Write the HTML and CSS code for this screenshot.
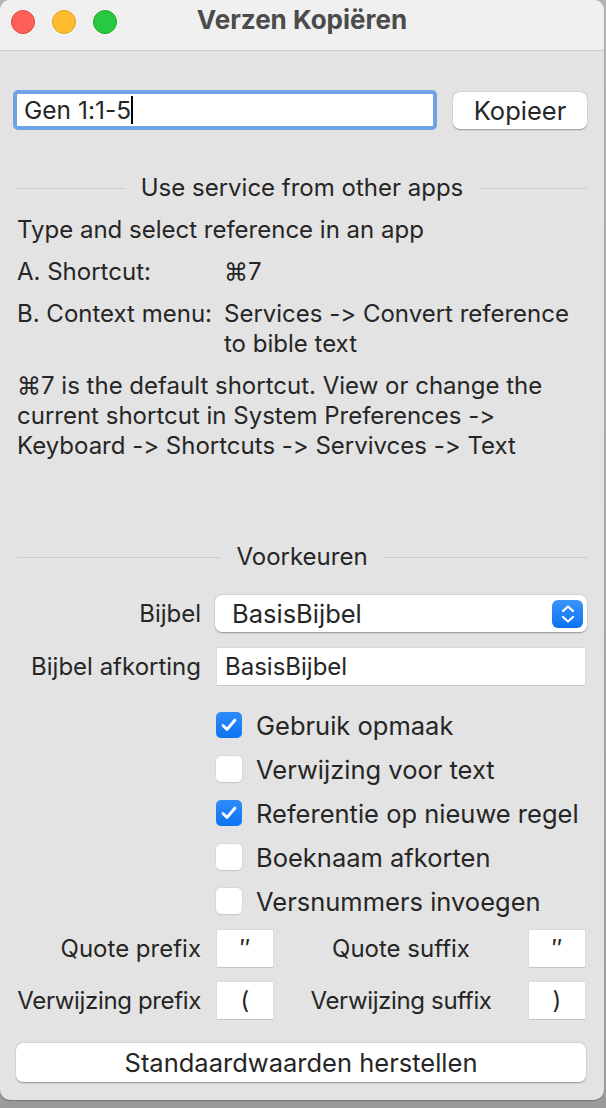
FILE: index.html
```html
<!DOCTYPE html>
<html>
<head>
<meta charset="utf-8">
<link rel="stylesheet" href="styles.css">
</head>
<body>
<div class="window">
  <div class="titlebar">
    <div class="lights">
      <span class="light red"></span>
      <span class="light yellow"></span>
      <span class="light green"></span>
    </div>
    <div class="title">Verzen Kopiëren</div>
  </div>
  <div class="content">
    <div class="toprow">
      <div class="search"><span class="searchtext">Gen 1:1-5</span><span class="caret"></span></div>
      <div class="btn kopieer">Kopieer</div>
    </div>

    <div class="info">
      <div class="sep"><span class="sepline"></span><span class="septext">Use service from other apps</span><span class="sepline"></span></div>
      <div class="line">Type and select reference in an app</div>
      <div class="kv"><span class="k">A. Shortcut:</span><span class="v">⌘7</span></div>
      <div class="kv"><span class="k">B. Context menu:</span><span class="v">Services -&gt; Convert reference<br>to bible text</span></div>
      <div class="line">⌘7 is the default shortcut. View or change the current shortcut in System Preferences -&gt; Keyboard -&gt; Shortcuts -&gt; Servivces -&gt; Text</div>
    </div>

    <div class="sep sep2"><span class="sepline"></span><span class="septext">Voorkeuren</span><span class="sepline"></span></div>

    <div class="prefs">
      <div class="prow">
        <span class="plabel">Bijbel</span>
        <div class="popup"><span>BasisBijbel</span>
          <span class="stepper"><svg width="16" height="22" viewBox="0 0 16 22"><path d="M3 8 L8 3.5 L13 8" fill="none" stroke="#fff" stroke-width="2.2" stroke-linecap="round" stroke-linejoin="round"/><path d="M3 14 L8 18.5 L13 14" fill="none" stroke="#fff" stroke-width="2.2" stroke-linecap="round" stroke-linejoin="round"/></svg></span>
        </div>
      </div>
      <div class="prow afk">
        <span class="plabel">Bijbel afkorting</span>
        <div class="field wide">BasisBijbel</div>
      </div>
      <div class="checks">
        <div class="check"><span class="box on"><svg width="18" height="16" viewBox="0 0 18 16"><path d="M3 8.5 L7 12.5 L15 3" fill="none" stroke="#fff" stroke-width="2.8" stroke-linecap="round" stroke-linejoin="round"/></svg></span>Gebruik opmaak</div>
        <div class="check"><span class="box"></span>Verwijzing voor text</div>
        <div class="check"><span class="box on"><svg width="18" height="16" viewBox="0 0 18 16"><path d="M3 8.5 L7 12.5 L15 3" fill="none" stroke="#fff" stroke-width="2.8" stroke-linecap="round" stroke-linejoin="round"/></svg></span>Referentie op nieuwe regel</div>
        <div class="check"><span class="box"></span>Boeknaam afkorten</div>
        <div class="check"><span class="box"></span>Versnummers invoegen</div>
      </div>
      <div class="affix">
        <span class="alab1">Quote prefix</span>
        <div class="field small first">″</div>
        <span class="alab2">Quote suffix</span>
        <div class="field small">″</div>
      </div>
      <div class="affix a2">
        <span class="alab1 tight">Verwijzing prefix</span>
        <div class="field small first">(</div>
        <span class="alab2 tight">Verwijzing suffix</span>
        <div class="field small">)</div>
      </div>
      <div class="btn reset">Standaardwaarden herstellen</div>
    </div>
  </div>
</div>
</body>
</html>
```

FILE: styles.css
```css
* { box-sizing: border-box; }
html, body { margin: 0; padding: 0; }
body {
  width: 606px;
  height: 1108px;
  background: linear-gradient(#b4b4b4, #9a9a9a);
  font-family: Inter, "Noto Sans", sans-serif;
  font-feature-settings: "calt" 0;
  font-size: 24px;
  color: #262626;
  overflow: hidden;
}
.window {
  width: 604px;
  height: 1100px;
  background: #e3e3e3;
  border-radius: 10px;
  overflow: hidden;
  box-shadow: 0 1px 1px rgba(0,0,0,0.25);
}
.titlebar {
  height: 51px;
  background: #f0f0f0;
  border-bottom: 1px solid #c9c9c9;
  display: flex;
  align-items: center;
  position: relative;
}
.lights {
  display: flex;
  gap: 17px;
  padding-left: 11px;
  margin-top: -6px;
}
.light {
  width: 24px;
  height: 24px;
  border-radius: 50%;
  display: block;
}
.red { background: #fe5f57; border: 1px solid #e0443e; }
.yellow { background: #febc2e; border: 1px solid #dea123; }
.green { background: #28c840; border: 1px solid #1aab29; }
.title {
  position: absolute;
  left: 0; right: 0; top: 5px;
  text-align: center;
  font-weight: 700;
  font-size: 26px;
  color: #4b4b4b;
  line-height: 30px;
}
.content {
  padding: 39px 17px 0 17px;
}
.toprow {
  display: flex;
  align-items: center;
  height: 40px;
}
.search {
  width: 424px;
  height: 40px;
  margin-left: -4px;
  border: 4px solid #6fa3e6;
  border-radius: 5px;
  background: #fff;
  display: flex;
  align-items: center;
  padding-left: 7px;
  font-size: 24.5px;
}
.caret {
  display: inline-block;
  width: 2px;
  height: 28px;
  background: #000;
}
.btn {
  background: #fff;
  border-radius: 7px;
  box-shadow: 0 0.5px 1.5px rgba(0,0,0,0.35);
  display: flex;
  align-items: center;
  justify-content: center;
  font-size: 25.5px;
}
.kopieer {
  margin-left: 16px;
  width: 134px;
  height: 37px;
}
.info {
  margin-top: 43px;
  display: flex;
  flex-direction: column;
  gap: 12px;
  line-height: 30px;
}
.sep {
  display: flex;
  align-items: center;
  height: 30px;
  line-height: 30px;
}
.sepline {
  flex: 1;
  height: 1px;
  background: #cbcbcb;
}
.septext { padding: 0 16px; }
.kv { display: flex; }
.k { width: 207px; flex: none; }
.sep2 { margin-top: 81px; }
.prefs {
  display: flex;
  flex-direction: column;
}
.prow {
  display: flex;
  align-items: center;
  margin-top: 23px;
}
.plabel {
  width: 184px;
  text-align: right;
  flex: none;
  white-space: nowrap;
}
.popup {
  margin-left: 14px;
  flex: 1;
  height: 37px;
  background: #fff;
  border-radius: 7px;
  box-shadow: 0 0.5px 1.5px rgba(0,0,0,0.35);
  display: flex;
  align-items: center;
  justify-content: space-between;
  padding-left: 17px;
  padding-right: 4px;
  font-size: 25.5px;
}
.stepper {
  width: 31px;
  height: 28px;
  border-radius: 6px;
  background: linear-gradient(#3b94fb, #0a72f0);
  display: flex;
  align-items: center;
  justify-content: center;
}
.afk { margin-top: 16px; }
.field {
  background: #fff;
  height: 37px;
  box-shadow: 0 1px 0 #c6c6c6, 0 0 0 0.5px #d4d4d4;
  display: flex;
  align-items: center;
  font-size: 24px;
}
.wide {
  margin-left: 16px;
  width: 368px;
  padding-left: 8px;
}
.checks {
  margin-top: 25px;
  padding-left: 199px;
  display: flex;
  flex-direction: column;
  gap: 14px;
}
.check {
  display: flex;
  align-items: center;
  height: 30px;
  font-size: 25.5px;
}
.box {
  width: 26px;
  height: 26px;
  border-radius: 5px;
  background: #fff;
  box-shadow: 0 0 0 0.5px #cfcfcf, 0 0.5px 1px rgba(0,0,0,0.15);
  margin-right: 14px;
  display: flex;
  align-items: center;
  justify-content: center;
}
.box.on {
  background: linear-gradient(#2f8cfa, #0c74f2);
  box-shadow: none;
}
.affix {
  display: grid;
  grid-template-columns: 184px 72px 256px 56px;
  align-items: center;
  margin-top: 14px;
}
.small.first { margin-left: 16px; }
.alab1 {
  text-align: right;
  white-space: nowrap;
}
.alab2 {
  text-align: center;
  white-space: nowrap;
}
.tight { letter-spacing: -0.35px; }
.a2 { margin-top: 15px; }
.small {
  width: 56px;
  justify-content: center;
}
.reset {
  margin-top: 24px;
  height: 39px;
  width: 570px;
  margin-left: -1px;
}
```
